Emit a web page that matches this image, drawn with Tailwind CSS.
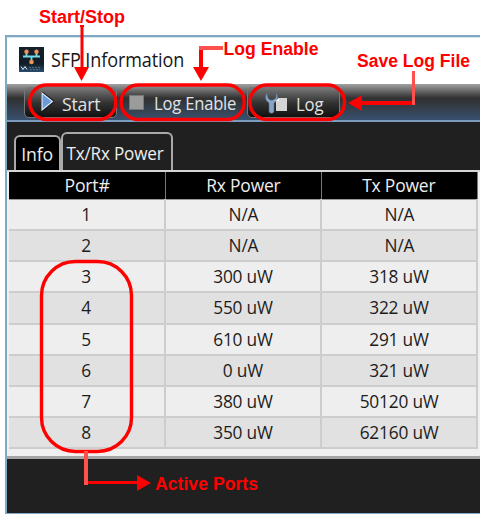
<!DOCTYPE html>
<html lang="en">
<head>
<meta charset="utf-8">
<title>SFP Information</title>
<script src="https://cdn.jsdelivr.net/npm/@tailwindcss/browser@4"></script>
</head>
<body class="bg-white">
<div class="relative w-[482px] h-[516px] overflow-hidden bg-white font-['Open_Sans','Noto_Sans',sans-serif] text-[18px] tracking-[-0.2px] leading-none whitespace-nowrap">
  <main class="ml-[5px] mt-[35px] w-[475px] h-[479px] flex flex-col border-l-2 border-t-2 border-b border-[#80a9c3] bg-[#202020]">
    <header class="h-[47px] shrink-0 bg-white flex items-center pl-3 gap-[7px] border-t border-[#d2e5ee] text-[#161616]">
      <svg class="w-[25px] h-[25px] mt-[-3px]" viewBox="0 0 25 25">
        <defs><linearGradient id="navy" x2="0" y2="1"><stop stop-color="#17212b"/><stop offset=".65" stop-color="#101c27"/><stop offset="1" stop-color="#294d6e"/></linearGradient></defs>
        <rect width="25" height="25" fill="url(#navy)"/>
        <path d="M4 9.500h17M7.500 5v4M17.500 5v4M12.500 10v5" stroke="#71dce5" stroke-width="1.800"/>
        <g fill="#ef925a"><circle cx="7.500" cy="4.800" r="2.200"/><circle cx="17.500" cy="4.800" r="2.200"/><circle cx="12.500" cy="15" r="2.300"/></g>
        <path d="M2 19.500l2 3 2-3 2 3" stroke="#dbe9f4" fill="none"/><path d="M10 20.500h12M11 22.500h10" stroke="#53687b" stroke-dasharray="2 1"/>
      </svg>
      <h1 class="text-[20px] tracking-[-0.1px] origin-left scale-x-[.9] mt-[-3px]">SFP Information</h1>
    </header>
    <nav class="h-[38px] shrink-0 flex items-start pl-[17px] pt-[3px] text-[#e3e3e3] border-b-2 border-[#7c9bbd] bg-linear-to-b from-[#a2a2a2] via-[#303030] via-40% to-[#38516f]">
      <div class="w-[93px] h-[31px] flex items-center pl-[17px] rounded-[5px] border border-[#777] bg-linear-to-b from-[#777] via-[#343434] to-[#111]">
        <svg class="w-[13px] h-[20px] mt-[-1px] -ml-px" viewBox="0 0 13 20"><path d="M1 1v17L11.500 9.500Z" fill="#5f91d5" stroke="#111" stroke-width="3"/><path d="M1 1v17L11.500 9.500Z" fill="#6c9bdc" stroke="#dce8f5" stroke-width="1.200"/></svg>
        <span class="ml-[8px] mt-[2px] origin-left scale-x-[.98]">Start</span>
      </div>
      <div class="ml-[12px] w-[118px] h-[31px] flex items-center"><i class="block w-[15px] h-[15px] mt-[-1px] bg-[#9b9b9b] border border-[#777]"></i><span class="ml-[10px] origin-left scale-x-[.92]">Log Enable</span></div>
      <div class="w-[93px] h-[31px] flex items-center pl-[17px] rounded-[5px] border border-[#777] bg-linear-to-b from-[#777] via-[#343434] to-[#111]">
        <svg class="w-[23px] h-[24px]" viewBox="0 0 23 24"><path d="M2 2c-3 5-1 8 2 10v8c0 3 5 3 5 0v-8c4-2 5-6 2-10v5L8 9H5L3 7Z" fill="#87a5c9" stroke="#55677b" stroke-width=".6"/><path d="M14 7h8v13H11V10Z" fill="#d5d5d5"/><path d="M11 10l3-3v3Z" fill="#fff"/></svg>
        <span class="ml-[8px] mt-[2px] origin-left scale-x-[.93]">Log</span>
      </div>
    </nav>
    <section class="h-[48px] shrink-0 flex items-end pl-[7px] text-[#eee]">
      <div class="w-[47px] h-[35px] flex items-center justify-center rounded-t-[6px] border-2 border-b-0 border-[#aaa] bg-black pt-[1px] pr-px"><span class="scale-x-[.98]">Info</span></div>
      <div class="w-[112px] h-[38px] flex items-center justify-center rounded-t-[6px] border-2 border-b-0 border-[#aaa] bg-[#202020] pt-px pr-[3px]"><span class="scale-x-[.95]">Tx/Rx Power</span></div>
    </section>
    <section class="h-[289px] shrink-0 border-t-2 border-b-3 border-b-[#a5a5a5] border-t-[#d5d5d5] bg-[#f0f0f0] pl-[2px]">
      <table class="table-fixed border-collapse w-[468px] text-center text-[#1c1c1c]">
        <colgroup><col class="w-[156px]"><col class="w-[156px]"><col class="w-[156px]"></colgroup>
        <thead><tr class="h-[27px] bg-black text-[#eee] border-b border-[#999]"><th class="font-normal p-0 border-r border-[#777]"><span class="inline-block scale-x-[.98]">Port#</span></th><th class="font-normal p-0 border-r border-[#777]"><span class="inline-block scale-x-[.97]">Rx Power</span></th><th class="font-normal p-0 border-r border-[#777]"><span class="inline-block scale-x-[.97]">Tx Power</span></th></tr></thead>
        <tbody id="ports"></tbody>
      </table>
    </section>
  </main>

  <svg class="absolute inset-0 w-[482px] h-[516px]" viewBox="0 0 482 516" fill="none" stroke="#fe0000">
    <g stroke-width="3.400"><rect x="29.800" y="85" width="86" height="34.500" rx="17"/><rect x="121.200" y="85" width="123" height="34.500" rx="17"/><rect x="250" y="85" width="94.500" height="34.500" rx="17"/><rect x="41.500" y="261.500" width="90" height="190" rx="34"/></g>
    <path d="M82 26v44" stroke-width="3"/><path d="M80 26h4" stroke-width="2"/>
    <path d="M201 50v18" stroke-width="4"/><path d="M199 48h24" stroke="#ff5050" stroke-width="4"/>
    <path d="M361 103h52" stroke-width="4"/><path d="M413.500 71v34" stroke="#ff5050" stroke-width="3"/>
    <path d="M86 451v34" stroke="#ff5050" stroke-width="4"/><path d="M88 482.500h50" stroke-width="3"/>
    <g fill="#fe0000" stroke="none"><path d="M74 67h15l-7.500 14Z"/><path d="M193 67h16l-8 14Z"/><path d="M362 95v16l-14-8Z"/><path d="M137 475v16l14-8Z"/></g>
    <g fill="#fe0000" stroke="none" font-family="Liberation Sans, Arial, sans-serif" font-size="17.500" font-weight="bold" letter-spacing="0">
      <text x="39" y="22.500" textLength="86" lengthAdjust="spacingAndGlyphs">Start/Stop</text><text x="223.500" y="54.500" textLength="95" lengthAdjust="spacingAndGlyphs">Log Enable</text><text x="357" y="66.500" textLength="113" lengthAdjust="spacingAndGlyphs">Save Log File</text><text x="155" y="489.500" textLength="103" lengthAdjust="spacingAndGlyphs">Active Ports</text>
    </g>
  </svg>
</div>
<script>
const rows=[['1','N/A','N/A'],['2','N/A','N/A'],['3','300 uW','318 uW'],['4','550 uW','322 uW'],['5','610 uW','291 uW'],['6','0 uW','321 uW'],['7','380 uW','50120 uW'],['8','350 uW','62160 uW']];
document.getElementById('ports').innerHTML=rows.map(r=>'<tr class="h-[31.15px] odd:bg-[#eeeeee] even:bg-[#e1e1e1]">'+r.map(v=>'<td class="p-0 pb-px border-r-2 border-b-2 border-[#cdcdcd]"><span class="inline-block scale-x-[.96]">'+v+'</span></td>').join('')+'</tr>').join('');
</script>
</body>
</html>
